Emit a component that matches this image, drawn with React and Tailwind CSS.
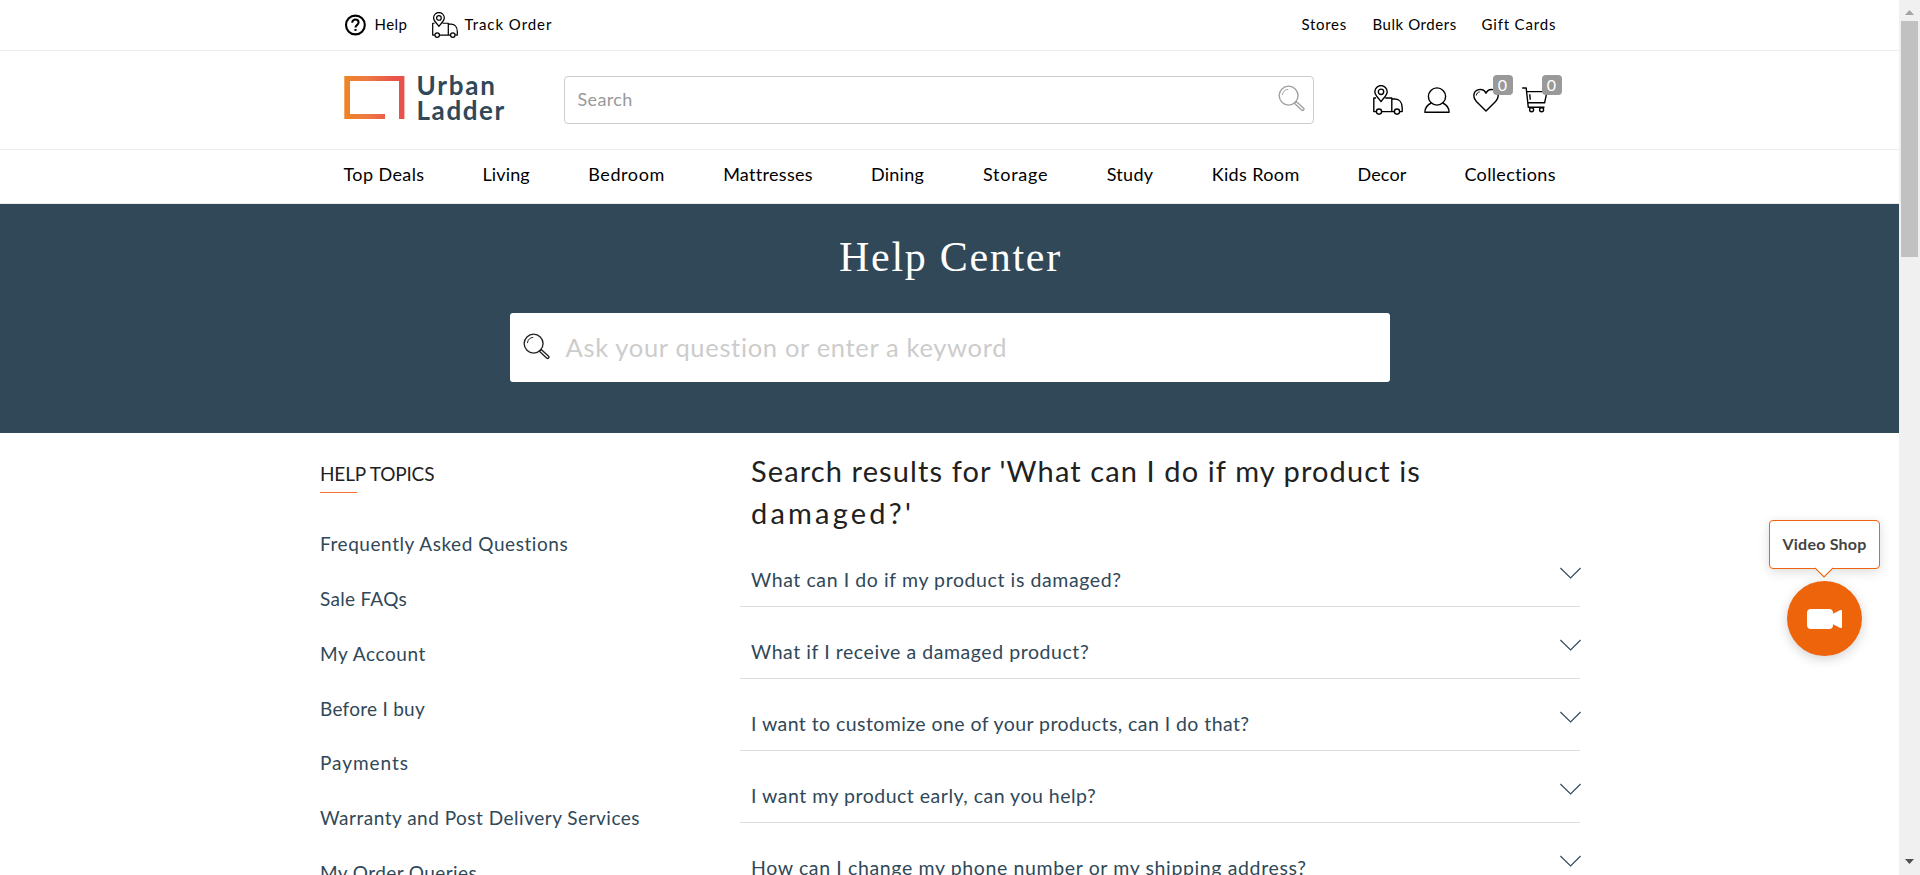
import React from "react";

const navItems = [
  { label: "Top Deals", cls: "w-[81px] tracking-[0.4px]" },
  { label: "Living", cls: "w-[48px] tracking-[0.154px]" },
  { label: "Bedroom", cls: "w-[77px] tracking-[0.58px]" },
  { label: "Mattresses", cls: "w-[90px] tracking-[0.3px]" },
  { label: "Dining", cls: "w-[54px] tracking-[0.234px]" },
  { label: "Storage", cls: "w-[66px] tracking-[0.779px]" },
  { label: "Study", cls: "w-[47px] tracking-[0.259px]" },
  { label: "Kids Room", cls: "w-[88px] tracking-[0.374px]" },
  { label: "Decor", cls: "w-[49px] tracking-[0.148px]" },
  { label: "Collections", cls: "w-[91px] tracking-[0.36px]" },
];

const topics = [
  { label: "Frequently Asked Questions", cls: "tracking-[0.56px]" },
  { label: "Sale FAQs", cls: "tracking-[0.285px]" },
  { label: "My Account", cls: "tracking-[0.6px]" },
  { label: "Before I buy", cls: "tracking-[0.264px]" },
  { label: "Payments", cls: "tracking-[0.965px]" },
  { label: "Warranty and Post Delivery Services", cls: "tracking-[0.5px]" },
  { label: "My Order Queries", cls: "tracking-[0.4px]" },
];

const questions = [
  { label: "What can I do if my product is damaged?", cls: "tracking-[0.59px]" },
  { label: "What if I receive a damaged product?", cls: "tracking-[0.56px]" },
  { label: "I want to customize one of your products, can I do that?", cls: "tracking-[0.43px]" },
  { label: "I want my product early, can you help?", cls: "tracking-[0.5px]" },
  { label: "How can I change my phone number or my shipping address?", cls: "tracking-[0.63px]" },
];

function HelpIcon() {
  return (
    <svg className="h-[22px] w-[22px]" viewBox="0 0 22 22" fill="none" stroke="#000">
      <circle cx="11.4" cy="11" r="9.4" strokeWidth="2.1" />
      <path d="M8.2 8.8C8.2 6.8 9.6 5.6 11.4 5.6s3.2 1.2 3.2 3c0 2.2-3.1 2.4-3.1 4.9" strokeWidth="2" />
      <path d="M11.5 14.9v2" strokeWidth="2.1" />
    </svg>
  );
}

function TruckIcon({ className }) {
  return (
    <svg className={className} viewBox="0 0 30 30" fill="none" stroke="#000" strokeWidth="1.4" strokeLinejoin="round">
      <path d="M8 16.6C5.4 12.8 1.8 10.3 1.8 6.8a6.2 6.2 0 0 1 12.4 0c0 3.5-3.6 6-6.2 9.8z" />
      <circle cx="8" cy="6.8" r="2.7" />
      <path d="M3 13H.8v13.6h2.4M8.8 26.6h12.4M26.8 26.6h2.4v-3.8c0-5.5-3-8.8-7.2-8.8h-3.2M12.2 13h6.6v13.6" />
      <circle cx="6" cy="26.6" r="2.6" />
      <circle cx="24" cy="26.6" r="2.6" />
    </svg>
  );
}

function MagnifierIcon({ className }) {
  return (
    <svg className={className} viewBox="0 0 28 28" fill="none" stroke="currentColor" strokeWidth="1.4" strokeLinejoin="round">
      <circle cx="11" cy="11" r="9.8" />
      <path d="M4.6 10.5c.2-3.3 2.5-5.8 6-6" strokeWidth="1" />
      <path d="M17 19l1.9-1.9 7.7 7.1c1 1.1-.6 2.9-1.9 1.9z" />
    </svg>
  );
}

function Logo() {
  return (
    <div className="flex items-start">
      <svg className="h-[43px] w-[61px]" viewBox="0 0 61 43">
        <defs>
          <linearGradient id="frame" x1="0" y1="0" x2="1" y2="0">
            <stop offset="0" stopColor="#ee8424" />
            <stop offset="0.35" stopColor="#ee7b42" />
            <stop offset="0.8" stopColor="#e9564b" />
            <stop offset="1" stopColor="#e9504a" />
          </linearGradient>
        </defs>
        <path fill="url(#frame)" d="M0.3 0H60.4V43H55V5H6V38H41V43H0.3z" />
      </svg>
      <div className="-mt-[3px] ml-[12px] flex flex-col text-[26px] leading-[25px] font-bold text-[#304858]">
        <span className="h-[25px] tracking-[1.8px]">Urban</span>
        <span className="h-[25px] tracking-[1.6px]">Ladder</span>
      </div>
    </div>
  );
}

function Badge() {
  return (
    <span className="absolute -top-[12px] left-[20px] flex h-5 w-5 items-center justify-center rounded-[4px] bg-[#999] text-[16px] leading-5 text-white">
      0
    </span>
  );
}

function Scrollbar() {
  return (
    <div className="flex h-full w-[21px] shrink-0 flex-col items-center justify-between bg-[#f0f0f0]">
      <div className="flex flex-col items-center">
        <div className="flex h-[21px] items-center pt-[3px]">
          <svg className="h-[5px] w-[9px]" viewBox="0 0 9 5"><path d="M0 5L4.5 0L9 5z" fill="#a3a3a3" /></svg>
        </div>
        <div className="h-[236px] w-[17px] bg-[#c1c1c1]" />
      </div>
      <div className="flex h-[19px] items-center pb-2">
        <svg className="h-[5px] w-[9px]" viewBox="0 0 9 5"><path d="M0 0L4.5 5L9 0z" fill="#505050" /></svg>
      </div>
    </div>
  );
}

function VideoShop() {
  return (
    <div className="absolute top-[520px] left-[1769px] flex w-[111px] flex-col items-center">
      <div className="relative flex h-[49px] w-full items-center justify-center rounded-[4px] border border-[#ee640b] bg-white pb-px text-[16px] font-bold tracking-[0.21px] text-[#444] shadow-[0_3px_12px_rgba(0,0,0,0.14)]">
        Video Shop
        <svg className="absolute top-[46px] left-[45px] h-[12px] w-[18px]" viewBox="0 0 18 12">
          <path d="M0 0H18V1.5L9 10.5L0 1.5z" fill="#fff" />
          <path d="M0 1L9 10L18 1" fill="none" stroke="#ee640b" strokeWidth="1.1" />
        </svg>
      </div>
      <div className="mt-3 flex h-[75px] w-[75px] items-center justify-center rounded-full bg-[#ee640b] shadow-[0_3px_12px_rgba(0,0,0,0.18)]">
        <svg className="h-5 w-[35px]" viewBox="0 0 35 20" fill="#fff">
          <rect x="0" y="0" width="26" height="20" rx="4" />
          <path d="M24 5.8L33.4 1Q35 .6 35 2V18Q35 19.4 33.4 19L24 14.2z" />
        </svg>
      </div>
    </div>
  );
}

export default function App() {
  return (
    <div className="relative flex h-[875px] w-[1920px] overflow-hidden bg-white font-['Lato',sans-serif] whitespace-nowrap text-black">
      <div className="flex min-w-0 flex-1 flex-col">
        <div className="flex h-[51px] shrink-0 justify-center border-b border-[#ececec]">
          <div className="flex h-[49px] w-[1212px] items-center justify-between text-[15px]">
            <div className="flex items-center">
              <HelpIcon />
              <span className="ml-[9px] w-[34px] tracking-[0.478px]">Help</span>
              <TruckIcon className="ml-[23px] h-[26px] w-[26px]" />
              <span className="ml-[7px] tracking-[0.95px]">Track Order</span>
            </div>
            <div className="-mr-[1px] flex">
              <span className="w-[71px] tracking-[0.7px]">Stores</span>
              <span className="w-[109px] tracking-[0.56px]">Bulk Orders</span>
              <span className="w-[75px] tracking-[0.82px]">Gift Cards</span>
            </div>
          </div>
        </div>

        <header className="flex h-[99px] shrink-0 justify-center border-b border-[#ececec]">
          <div className="flex h-full w-[1212px] items-start">
            <div className="w-[220px] pt-[25px]"><Logo /></div>
            <div className="mt-[25px] flex h-12 w-[750px] items-center justify-between rounded-[4px] border border-[#ccc] pr-[8px] pl-[13px] text-[18px] text-[#999]">
              <span className="pb-px tracking-[0.35px]">Search</span>
              <MagnifierIcon className="mb-[3px] h-[27px] w-[27px] text-[#a0a0a0]" />
            </div>
            <div className="flex items-start pt-[34px] pl-[59px]">
              <TruckIcon className="h-[30px] w-[30px]" />
              <svg className="mt-[2px] ml-[21px] h-[27px] w-[26px]" viewBox="0 0 26 27" fill="none" stroke="#000" strokeWidth="1.4">
                <circle cx="13" cy="9.5" r="8.6" />
                <path d="M7.3 16C3.5 17.6 1 21 .9 25.3H25.1C25 21 22.5 17.6 18.7 16" strokeLinejoin="round" />
              </svg>
              <div className="relative mt-[2px] ml-[23px] h-[26px] w-[26px]">
                <svg className="h-full w-full" viewBox="0 0 26 26" fill="none" stroke="#000" strokeWidth="1.4">
                  <path d="M13 24L3.4 14.4C1.7 12.7.8 11 .8 8.8A6.4 6.4 0 0 1 13 6.2 6.4 6.4 0 0 1 25.2 8.8C25.2 11 24.3 12.7 22.6 14.4z" strokeLinejoin="round" />
                  <path d="M3.3 8.5c.2-2 1.5-3.4 3.4-3.6" strokeWidth="1" />
                </svg>
                <Badge />
              </div>
              <div className="relative mt-[2px] ml-[23px] h-[26px] w-[26px]">
                <svg className="h-full w-full" viewBox="0 0 26 26" fill="none" stroke="#000" strokeWidth="1.4">
                  <path d="M.2 1H4.2L6.3 20.3H22.5M4.7 4.6H25L22.6 15.8H5.8M7.8 7.2L8.2 12.8" strokeLinejoin="round" />
                  <circle cx="9.6" cy="22.8" r="2" />
                  <circle cx="19.6" cy="22.8" r="2" />
                </svg>
                <Badge />
              </div>
            </div>
          </div>
        </header>

        <nav className="flex h-[54px] shrink-0 justify-center border-b border-[#ececec]">
          <div className="flex h-[49px] w-[1212px] items-center justify-between text-[18px]">
            {navItems.map((n) => (
              <a key={n.label} className={n.cls}>{n.label}</a>
            ))}
          </div>
        </nav>

        <section className="flex h-[229px] shrink-0 flex-col items-center bg-[#304858]">
          <h1 className="mt-[28px] pl-[2px] font-['Liberation_Serif',serif] text-[42px] leading-[50px] tracking-[1.7px] text-white">Help Center</h1>
          <div className="mt-[31px] flex h-[69px] w-[880px] items-center rounded-[3px] bg-white">
            <MagnifierIcon className="mb-[2px] ml-[13px] h-[27px] w-[27px] text-[#222]" />
            <span className="ml-[16px] pb-[1px] text-[25.5px] tracking-[0.67px] text-[#ccc]">Ask your question or enter a keyword</span>
          </div>
        </section>

        <main className="ml-[319px] flex w-[1263px]">
          <aside className="w-[421px] shrink-0 pt-[29px] pl-px">
            <h2 className="text-[19px] leading-[24px] tracking-[-0.15px] text-[#212121]">HELP TOPICS</h2>
            <div className="mt-[6px] h-px w-[37px] bg-[#f36f36]" />
            <ul className="mt-[24px] flex flex-col text-[19px] text-[#304858]">
              {topics.map((t) => (
                <li key={t.label} className={"flex h-[54.8px] items-center " + t.cls}>{t.label}</li>
              ))}
            </ul>
          </aside>
          <div className="flex flex-col">
            <h2 className="flex flex-col pt-[17px] pl-[11px] text-[29px] leading-[42px] text-[#212121]">
              <span className="tracking-[1.11px]">Search results for 'What can I do if my product is</span>
              <span className="tracking-[3.2px]">damaged?'</span>
            </h2>
            <ul className="mt-[1px] flex w-[842px] flex-col text-[19.5px] text-[#304858]">
              {questions.map((q) => (
                <li key={q.label} className="flex h-[72px] shrink-0 items-end">
                  <div className="flex h-[53px] w-[840px] shrink-0 items-start border-b border-[#ddd] pt-[13px] pl-[11px]">
                    <span className={"flex-1 leading-[26px] " + q.cls}>{q.label}</span>
                    <svg className="-mr-[1px] h-3 w-[22px]" viewBox="0 0 22 12" fill="none" stroke="#304858" strokeWidth="1.1">
                      <path d="M1.4 1L11.6 11L21.6 1" />
                    </svg>
                  </div>
                </li>
              ))}
            </ul>
          </div>
        </main>
      </div>
      <Scrollbar />
      <VideoShop />
    </div>
  );
}
